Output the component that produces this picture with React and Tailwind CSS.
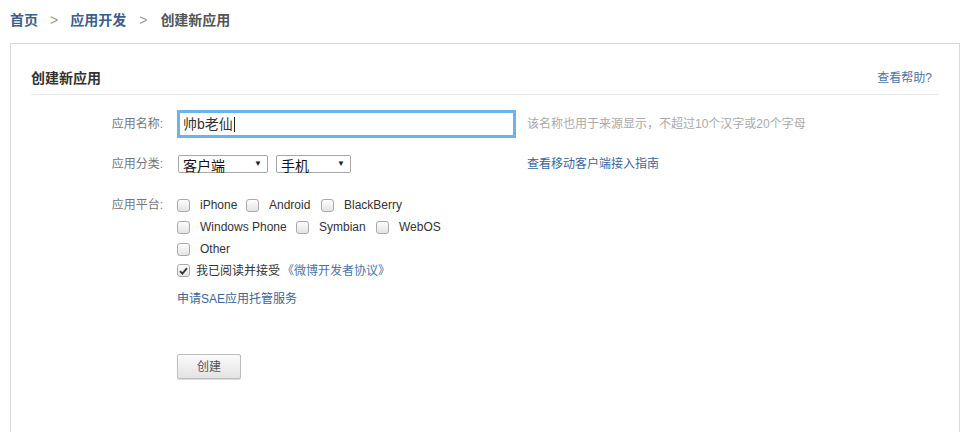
import React from "react";

const CJK = "font-['Liberation_Sans','Noto_Sans_CJK_SC',sans-serif]";

function Box({ checked }) {
  return (
    <span className="inline-flex h-[13px] w-[13px] shrink-0 items-center justify-center rounded-[3px] border border-[#a9a9a9] bg-gradient-to-b from-[#fdfdfd] to-[#e4e4e4]">
      {checked && (
        <svg width="9" height="8" viewBox="0 0 9 8">
          <path d="M1 4.2 L3.4 6.6 L8 1.2" fill="none" stroke="#333" strokeWidth="1.8" />
        </svg>
      )}
    </span>
  );
}

function Opt({ label, w }) {
  return (
    <span className="flex items-center">
      <Box />
      <span className="ml-[10px] whitespace-nowrap text-[12px] text-[#333]" style={{ width: w }}>{label}</span>
    </span>
  );
}

function Select({ label, w }) {
  return (
    <div
      className="flex h-[18px] items-center justify-between rounded-[2px] border border-[#a6a6a6] bg-white pl-[4px] pr-[5px]"
      style={{ width: w }}
    >
      <span className="mt-[4px] text-[14px] leading-[14px] text-[#111]">{label}</span>
      <span className="text-[8px] leading-none text-[#222]">▼</span>
    </div>
  );
}

export default function App() {
  return (
    <div className={`${CJK} min-h-[432px] w-[973px] bg-white`}>
      <div className="mt-[10px] flex h-[20px] items-center pl-[10px] text-[14px] leading-[20px]">
        <span className="font-semibold text-[#3b5e8a]">首页</span>
        <span className="mx-[12px] text-[#999]">&gt;</span>
        <span className="font-semibold text-[#3b5e8a]">应用开发</span>
        <span className="mx-[13px] text-[#999]">&gt;</span>
        <span className="font-semibold text-[#555]">创建新应用</span>
      </div>

      <div className="ml-[10px] mt-[13px] h-[400px] w-[950px] border border-[#d9d9d9] px-[20px] pt-[24px]">
        <div className="flex items-center justify-between border-b border-[#ebebeb] pb-[6px] pr-[7px]">
          <span className="text-[14px] font-bold leading-[20px] text-[#333]">创建新应用</span>
          <span className="text-[12px] leading-[20px] text-[#4a74a8]">查看帮助?</span>
        </div>

        <div className="mt-[15px] flex h-[28px] items-center">
          <div className="w-[132px] text-right text-[12px] text-[#777]">应用名称:</div>
          <div className="ml-[14px] flex h-[28px] w-[339px] items-center border-[3px] border-[#6cb3ec] bg-white pl-[3px]">
            <span className="text-[14px] text-[#333]">帅b老仙</span>
            <span className="ml-[1px] h-[15px] w-[1px] bg-[#222]" />
          </div>
          <div className="ml-[11px] text-[12px] text-[#aaa]">该名称也用于来源显示，不超过10个汉字或20个字母</div>
        </div>

        <div className="mt-[17px] flex h-[18px] items-center">
          <div className="w-[132px] text-right text-[12px] text-[#777]">应用分类:</div>
          <div className="ml-[15px] flex w-[349px] items-center gap-[8px]">
            <Select label="客户端" w={90} />
            <Select label="手机" w={75} />
          </div>
          <div className="text-[12px] text-[#3b6598]">查看移动客户端接入指南</div>
        </div>

        <div className="mt-[21px] flex">
          <div className="w-[132px] text-right text-[12px] leading-[22px] text-[#777]">应用平台:</div>
          <div className="ml-[14px] flex flex-col">
            <div className="flex h-[22px] items-center">
              <Opt label="iPhone" w={36} />
              <span className="w-[10px]" />
              <Opt label="Android" w={42} />
              <span className="w-[10px]" />
              <Opt label="BlackBerry" w={60} />
            </div>
            <div className="flex h-[22px] items-center">
              <Opt label="Windows Phone" w={86} />
              <span className="w-[10px]" />
              <Opt label="Symbian" w={47} />
              <span className="w-[10px]" />
              <Opt label="WebOS" w={42} />
            </div>
            <div className="flex h-[22px] items-center">
              <Opt label="Other" w={32} />
            </div>
            <div className="flex h-[21px] items-center">
              <Box checked />
              <span className="ml-[6px] text-[12px] text-[#333]">我已阅读并接受</span>
              <span className="ml-[2px] text-[12px] text-[#4a74a8]">《微博开发者协议》</span>
            </div>
            <div className="mt-[8px] h-[20px] text-[12px] leading-[20px] text-[#3b6598]">申请SAE应用托管服务</div>
            <button className="mt-[45px] h-[25px] w-[64px] rounded-[2px] border border-[#bdbdbd] bg-gradient-to-b from-[#fbfbfb] to-[#e3e3e3] text-[12px] text-[#555] shadow-[0_1px_0_#ddd]">
              创建
            </button>
          </div>
        </div>
      </div>
    </div>
  );
}
